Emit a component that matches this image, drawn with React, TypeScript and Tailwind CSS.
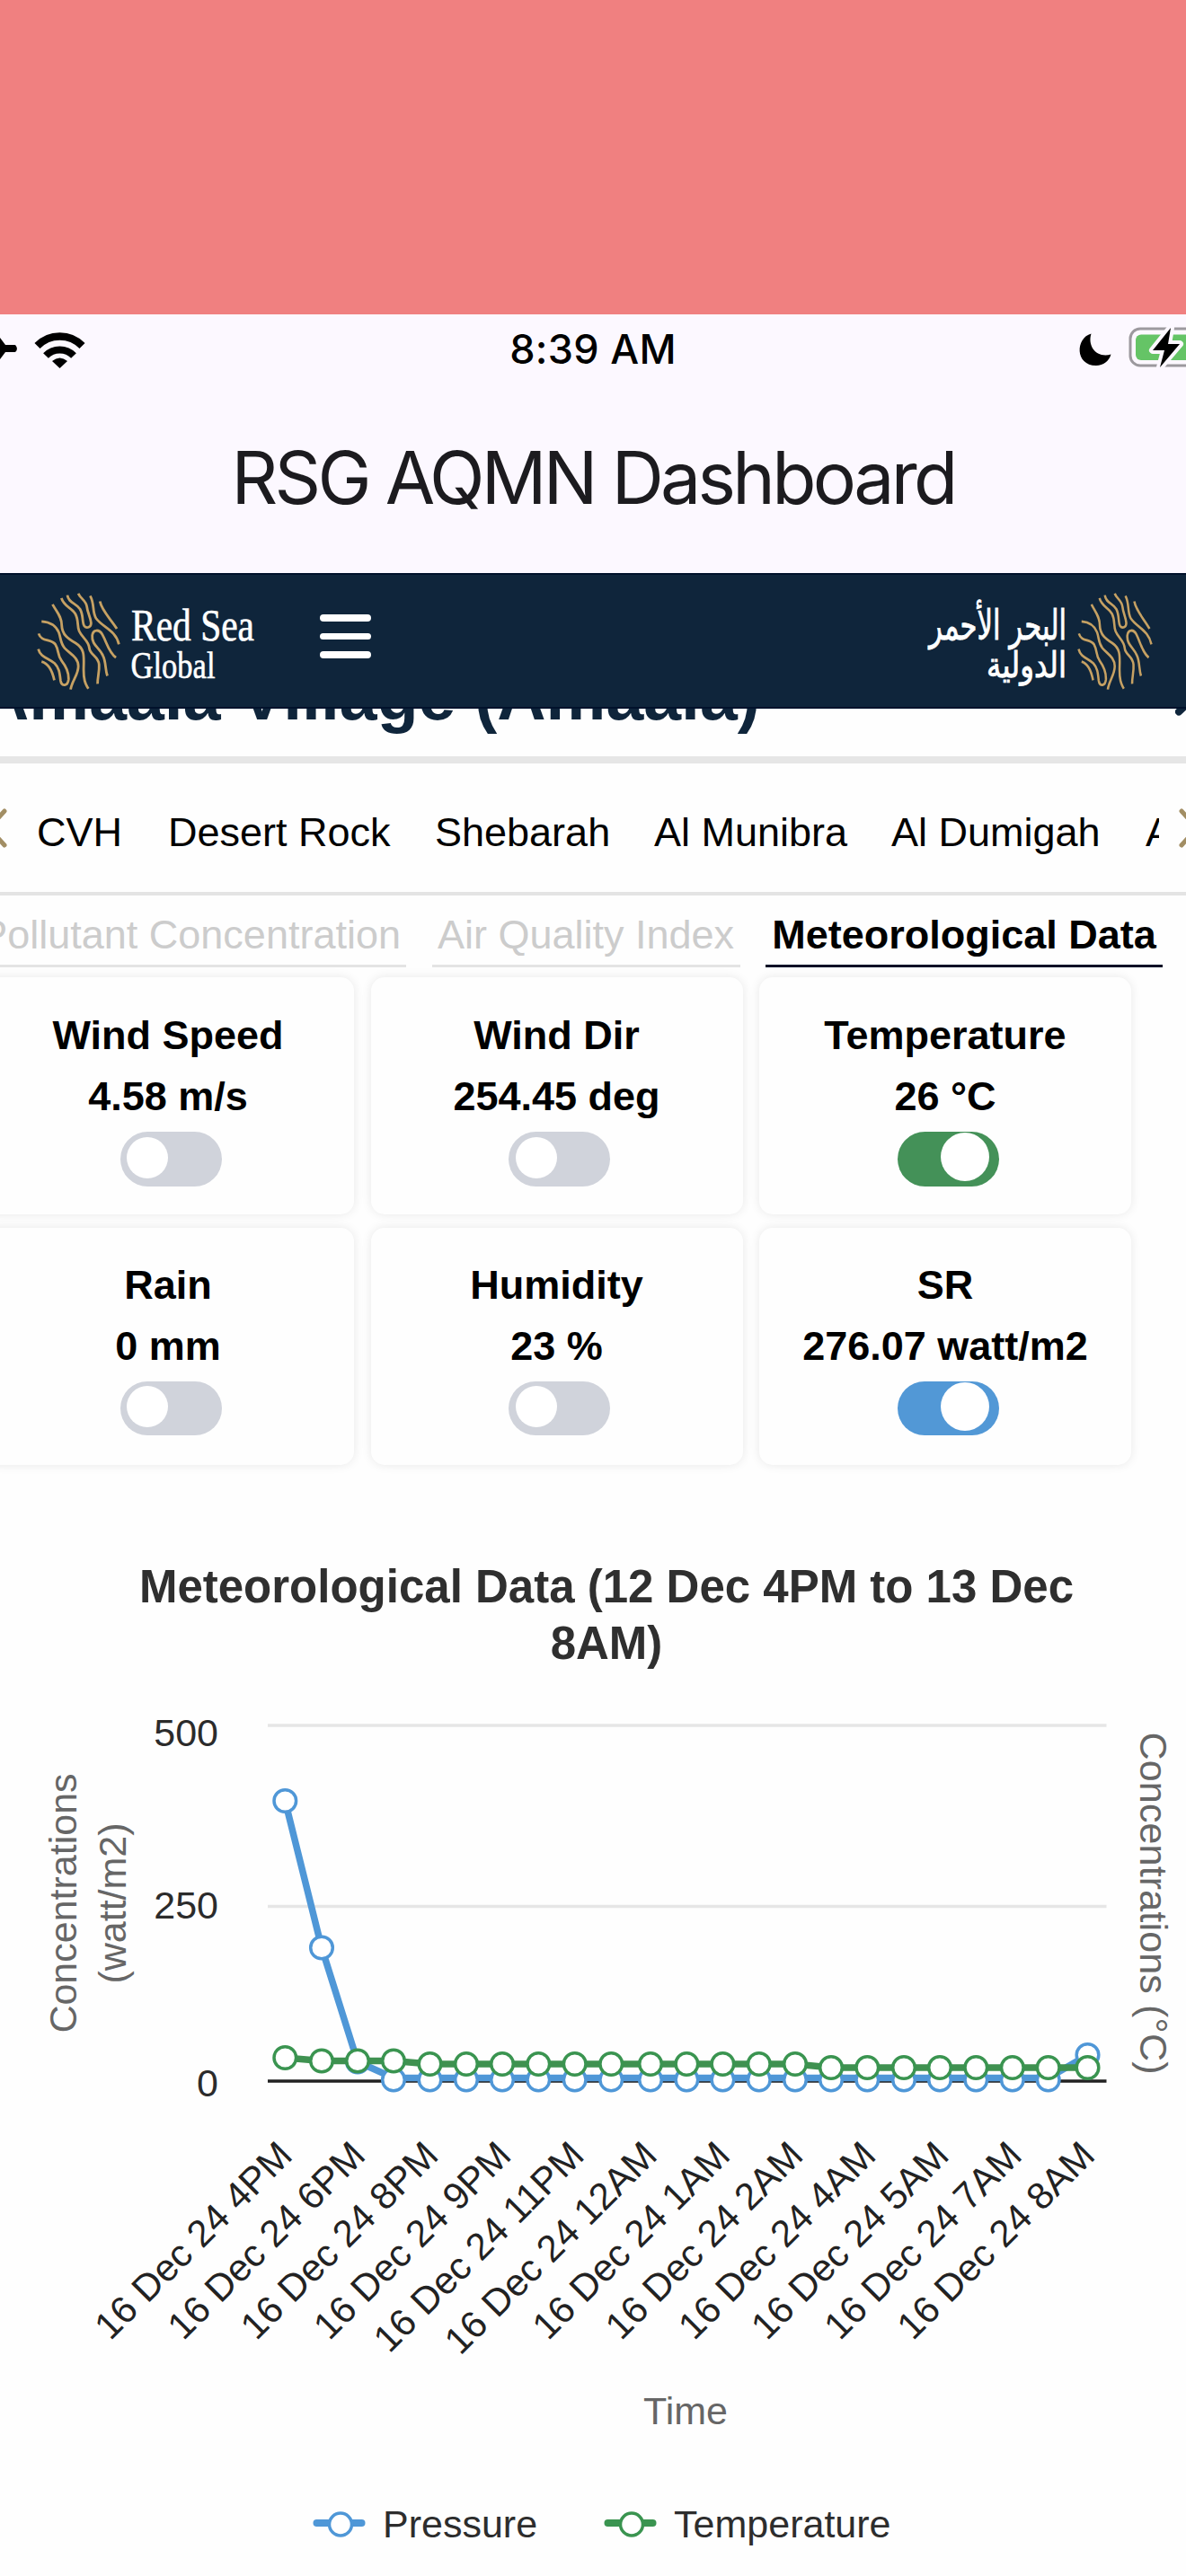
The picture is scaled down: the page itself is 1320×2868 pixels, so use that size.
const stations = [
  { name: "CVH", style: "ml-[40px] w-[146px]" },
  { name: "Desert Rock", style: "w-[297px]" },
  { name: "Shebarah", style: "w-[244px]" },
  { name: "Al Munibra", style: "w-[264px]" },
  { name: "Al Dumigah", style: "w-[283px]" },
  { name: "Al Wajh", style: "w-[145px]" },
];

const readings = [
  { title: "Wind Speed", value: "4.58 m/s", track: "bg-[#d0d3db]", on: false, pad: "pt-[31px]" },
  { title: "Wind Dir", value: "254.45 deg", track: "bg-[#d0d3db]", on: false, pad: "pt-[31px]" },
  { title: "Temperature", value: "26 °C", track: "bg-[#449158]", on: true, pad: "pt-[31px]" },
  { title: "Rain", value: "0 mm", track: "bg-[#d0d3db]", on: false, pad: "pt-[29.5px]" },
  { title: "Humidity", value: "23 %", track: "bg-[#d0d3db]", on: false, pad: "pt-[29.5px]" },
  { title: "SR", value: "276.07 watt/m2", track: "bg-[#5298d6]", on: true, pad: "pt-[29.5px]" },
];

// Chart geometry, in px relative to the chart svg
const xs = [
  317.3, 358, 398, 438, 478.5, 519, 559, 599.3, 639.7, 680.2, 724, 764.4, 804.4,
  844.8, 885, 925, 965.3, 1006, 1046, 1086.3, 1126.8, 1166.7, 1210.5,
];
const pressureY = xs.map((_, i) => {
  if (i === 0) return 144;
  if (i === 1) return 307.5;
  if (i === 2) return 434.5;
  if (i === xs.length - 1) return 427;
  return 454.5;
});
const temperatureY = xs.map((_, i) => {
  if (i === 0) return 430;
  if (i < 4) return 433.5;
  if (i < 15) return 437;
  return 441;
});

const timeLabels = [
  "4PM", "6PM", "8PM", "9PM", "11PM", "12AM", "1AM", "2AM", "4AM", "5AM", "7AM", "8AM",
];

const toPoints = (ys: number[], lift = 0) =>
  xs.map((x, i) => `${x},${ys[i] - (ys[i] === 454.5 ? lift : 0)}`).join(" ");

const BrandMark = ({ className }: { className: string }) => (
  <svg
    viewBox="122 56 282 332"
    preserveAspectRatio="none"
    className={className}
    fill="none"
    stroke="#c6a163"
    strokeWidth="8.5"
  >
    <path d="M138 155C165 157 186 167 196 192C204 212 200 226 216 245C234 264 262 276 262 306C262 336 240 355 236 384" />
    <path d="M175 98C188 122 206 138 206 168C207 200 228 214 253 228C284 247 281 272 280 310C279 350 285 365 296 381" />
    <path d="M205 77C213 106 240 108 252 130C264 152 257 170 265 188C275 210 297 220 299 244C301 268 330 272 332 300C334 326 326 344 327 365" />
    <path d="M225 67C229 94 255 93 268 114C280 135 274 158 282 170C290 180 306 175 305 160C303 140 293 126 291 106C288 84 268 78 262 61" />
    <path d="M302 69C318 98 308 124 322 145C345 176 388 184 399 232" />
    <path d="M335 88C341 120 374 150 392 180" />
    <path d="M389 277C364 258 359 228 343 199C332 180 312 182 309 202C306 234 334 244 345 270C356 292 352 315 360 338" />
    <path d="M128 196C138 226 170 212 185 233C198 254 190 268 206 288C222 308 230 328 229 350C227 372 206 376 202 354C199 330 198 312 182 296C160 278 134 276 127 248" />
    <path d="M138 290C162 296 174 320 181 353" />
  </svg>
);

const StatusBar = () => (
  <div className="relative flex h-[77px] items-center justify-center font-['Inter',sans-serif]">
    <svg className="absolute left-0 top-0" width="110" height="77" viewBox="0 0 110 77">
      {/* airplane tail */}
      <path d="M0 26L6 34H17Q21 38.500 17 42H6L0 50Z" fill="#000" />
      {/* wifi */}
      <g fill="none" stroke="#000" strokeWidth="8.500">
        <path d="M41.500 35A35 35 0 0 1 91.500 35" />
        <path d="M51 46A21.500 21.500 0 0 1 82 46" strokeWidth="8" />
      </g>
      <path d="M58 52Q66.500 45 75 52L66.500 60Z" fill="#000" />
    </svg>
    <span className="text-[45px] font-medium leading-none tracking-[0.3px] text-black">8:39 AM</span>
    <svg className="absolute right-0 top-0" width="130" height="77" viewBox="1190 350 130 77">
      <path d="M1214.500 371.500C1197 376 1196 407 1220 407C1228 407 1234.500 402 1236.500 394.500C1221 399 1210 386 1214.500 371.500Z" fill="#000" />
      <rect x="1258" y="366" width="90" height="41" rx="11" fill="none" stroke="#9c999e" strokeWidth="3" />
      <rect x="1264" y="372.500" width="80" height="28.500" rx="6" fill="#65c466" />
      <path
        d="M1303 365L1283 390H1296L1291 409L1313 383H1300Z"
        fill="#000"
        stroke="#fcf8ff"
        strokeWidth="8"
        paintOrder="stroke"
        strokeLinejoin="round"
      />
    </svg>
  </div>
);

const Header = () => (
  <header className="flex h-[151px] items-center border-y-2 border-[#00112b] bg-[#0f253b]">
    <BrandMark className="ml-[41px] h-[110px] w-[93px]" />
    <svg
      className="ml-[8px] overflow-visible"
      width="150"
      height="110"
      viewBox="142 658 150 110"
      fill="#fff"
      stroke="#fff"
      strokeWidth="0.6"
      fontFamily="'Liberation Serif', serif"
    >
      <text x="146" y="712" fontSize="50" textLength="137" lengthAdjust="spacingAndGlyphs">
        Red Sea
      </text>
      <text x="145.500" y="754" fontSize="43" textLength="94" lengthAdjust="spacingAndGlyphs">
        Global
      </text>
    </svg>
    <div className="ml-[64px] flex w-[57px] flex-col gap-[12.500px] pb-[10px]">
      <span className="h-[7.700px] rounded-full bg-white" />
      <span className="h-[7.700px] rounded-full bg-white" />
      <span className="h-[7.700px] rounded-full bg-white" />
    </div>
    <svg
      className="ml-auto overflow-visible"
      width="164"
      height="110"
      viewBox="1028 658 164 110"
      fill="#fff"
      stroke="#fff"
      strokeWidth="0.9"
      fontFamily="'DejaVu Sans', sans-serif"
    >
      <text x="1034" y="711" fontSize="46" textLength="153" lengthAdjust="spacingAndGlyphs">
        البحر الأحمر
      </text>
      <text x="1098" y="753" fontSize="39" textLength="89" lengthAdjust="spacingAndGlyphs">
        الدولية
      </text>
    </svg>
    <BrandMark className="ml-[7px] mr-[37px] h-[110px] w-[84px]" />
  </header>
);

const Reading = ({ item }: { item: (typeof readings)[number] }) => (
  <div
    className={`flex h-[264px] flex-col items-center rounded-[15px] bg-[#fefefe] shadow-[0_0_12px_rgba(0,0,0,0.09)] ${item.pad}`}
  >
    <p className="text-[45px] font-bold leading-[68px] text-black">{item.title}</p>
    <p className="whitespace-nowrap text-[45px] font-bold leading-[68px] text-black">{item.value}</p>
    <div className={`ml-[6px] mt-[5px] h-[60.500px] w-[113px] rounded-full ${item.track}`}>
      {item.on ? (
        <div className="ml-[48.500px] mt-px size-[54px] rounded-full bg-white" />
      ) : (
        <div className="ml-[7.500px] mt-[5.500px] size-[46px] rounded-full bg-white" />
      )}
    </div>
  </div>
);

const Chart = () => (
  <svg width="1320" height="870" viewBox="0 0 1320 870" fontFamily="'Liberation Sans', Arial, sans-serif">
    {/* grid and axis */}
    <line x1="298" x2="1231.500" y1="60" y2="60" stroke="#e6e6e6" strokeWidth="3.500" />
    <line x1="298" x2="1231.500" y1="261.500" y2="261.500" stroke="#e6e6e6" strokeWidth="3.500" />
    <line x1="298" x2="1231.500" y1="456" y2="456" stroke="#222" strokeWidth="3.500" />

    <g fontSize="43" fill="#2b2b2b" textAnchor="end">
      <text x="243" y="82.500">500</text>
      <text x="243" y="274.500">250</text>
      <text x="243" y="473">0</text>
    </g>

    <g fontSize="43" fill="#666">
      <text transform="translate(84.500 258) rotate(-90)" textAnchor="middle">Concentrations</text>
      <text transform="translate(139.500 258) rotate(-90)" textAnchor="middle">(watt/m2)</text>
      <text transform="translate(1268.500 258) rotate(90)" textAnchor="middle" textLength="381">Concentrations (°C)</text>
    </g>

    {/* pressure */}
    <polyline points={toPoints(pressureY, 2)} fill="none" stroke="#4f97d7" strokeWidth="7.5" />
    {xs.map((x, i) => (
      <circle key={x} cx={x} cy={pressureY[i]} r="12.300" fill="#fff" stroke="#4f97d7" strokeWidth="3.500" />
    ))}

    {/* temperature */}
    <polyline points={toPoints(temperatureY)} fill="none" stroke="#3f9150" strokeWidth="7.5" />
    {xs.map((x, i) => (
      <circle key={x} cx={x} cy={temperatureY[i]} r="12.300" fill="#fff" stroke="#3a9450" strokeWidth="3.500" />
    ))}

    <g fontSize="42" fill="#222" textAnchor="end">
      {timeLabels.map((label, i) => (
        <text key={label} transform={`translate(${327.5 + i * 81.2} 541) rotate(-45)`}>
          16 Dec 24 {label}
        </text>
      ))}
    </g>

    <text x="763" y="837.500" fontSize="43" fill="#666" textAnchor="middle">Time</text>
  </svg>
);

const LegendItem = ({ label, color }: { label: string; color: string }) => (
  <div className="flex items-center">
    <svg width="60" height="32" viewBox="0 0 60 32">
      <line x1="4.500" x2="54.500" y1="15" y2="15" stroke={color} strokeWidth="8" strokeLinecap="round" />
      <circle cx="31" cy="16.500" r="12.500" fill="#fff" stroke={color} strokeWidth="3.500" />
    </svg>
    <span className="ml-[18px] text-[43px] leading-none text-[#2d2d2d]">{label}</span>
  </div>
);

export default function App() {
  return (
    <div className="h-[2868px] w-[1320px] overflow-hidden bg-[#fefefe] font-['Liberation_Sans',Arial,sans-serif]">
      <div className="h-[350px] bg-[#f08080]" />

      <div className="h-[288px] bg-[#fcf8ff]">
        <StatusBar />
        <h1 className="flex h-[210px] items-center justify-center font-['Inter',sans-serif] text-[80.500px] leading-none tracking-[-3.700px] text-[#1c1b1f]">
          RSG AQMN Dashboard
        </h1>
      </div>

      <Header />

      {/* page title, scrolled half way under the header */}
      <div className="flex h-[61px] justify-between overflow-hidden border-b-8 border-[#e6e6e6]">
        <h2 className="-ml-[22px] -mt-[54px] whitespace-nowrap text-[75.200px] font-bold leading-[80px] text-[#0f253b]">
          Amaala Village (Amaala)
        </h2>
        <svg width="12" height="12" viewBox="0 0 12 12">
          <path d="M4 3.500L12 -4" stroke="#0f253b" strokeWidth="8" strokeLinecap="round" />
        </svg>
      </div>

      <nav className="flex h-[147px] items-center border-b-4 border-[#e4e4e4]">
        <svg width="1" height="44" viewBox="0 0 1 44" overflow="visible">
          <path d="M5 3L-12 22L5 41" fill="none" stroke="#a28e64" strokeWidth="5" strokeLinecap="round" />
        </svg>
        <div className="flex w-[1289px] overflow-hidden pt-[11px]">
          {stations.map((station) => (
            <span
              key={station.name}
              className={`shrink-0 whitespace-nowrap text-[45px] leading-[60px] text-black ${station.style}`}
            >
              {station.name}
            </span>
          ))}
        </div>
        <svg className="ml-[20px] shrink-0" width="10" height="44" viewBox="0 0 10 44">
          <path d="M5 3L22 22L5 41" fill="none" stroke="#a28e64" strokeWidth="5" strokeLinecap="round" />
        </svg>
      </nav>

      <div className="flex h-[80px] gap-[28.500px] pt-[10px] text-[45px] leading-[67px] text-[#ccc]">
        <span className="flex w-[452px] justify-end whitespace-nowrap border-b-[3px] border-[#e4e4e4] pr-[6px]">
          Pollutant Concentration
        </span>
        <span className="w-[343px] whitespace-nowrap border-b-[3px] border-[#e4e4e4] text-center">
          Air Quality Index
        </span>
        <span className="w-[442px] whitespace-nowrap border-b-[3px] border-[#000f26] text-center font-bold text-black">
          Meteorological Data
        </span>
      </div>

      <div className="-ml-[20px] mt-[11px] grid w-[1279px] grid-cols-3 gap-x-[18.500px] gap-y-[15px]">
        {readings.map((item) => (
          <Reading key={item.title} item={item} />
        ))}
      </div>

      <section className="mt-[105px]">
        <h3 className="ml-[30px] w-[1290px] whitespace-nowrap text-center text-[51px] font-bold leading-[62.500px] text-[#2f2f2f]">
          Meteorological Data (12 Dec 4PM to 13 Dec
          <br />
          8AM)
        </h3>
        <Chart />
        <div className="ml-[348px] mt-[61px] flex h-[36px] gap-[74px]">
          <LegendItem label="Pressure" color="#4f97d7" />
          <LegendItem label="Temperature" color="#3a9450" />
        </div>
      </section>
    </div>
  );
}
